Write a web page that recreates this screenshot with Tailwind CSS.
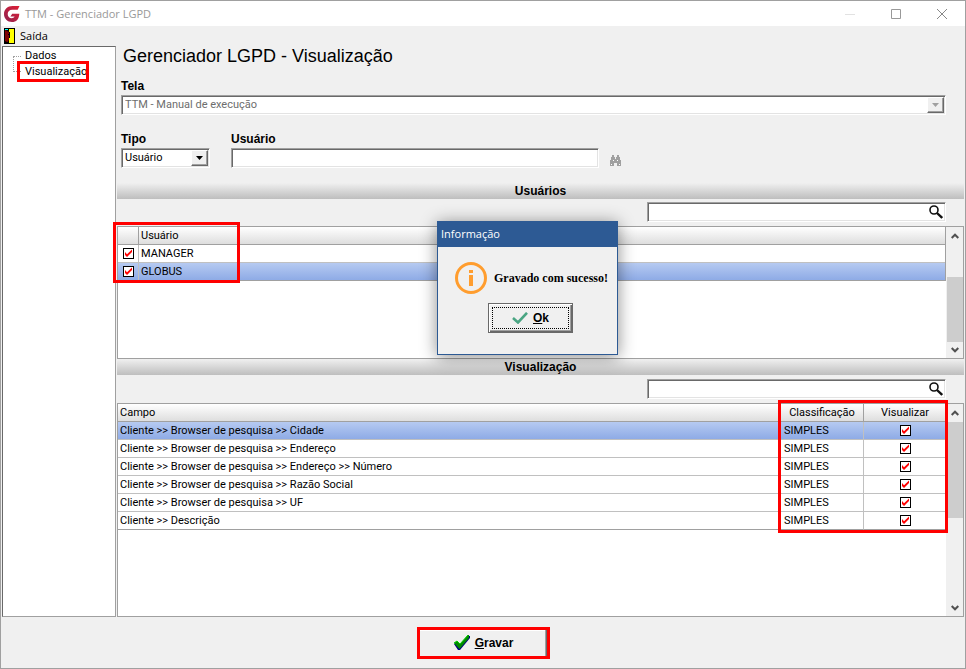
<!DOCTYPE html>
<html lang="pt-BR">
<head>
  <meta charset="UTF-8">
  <meta name="viewport" content="width=device-width, initial-scale=1.0">
  <title>TTM - Gerenciador LGPD</title>
  <script src="https://cdn.jsdelivr.net/npm/@tailwindcss/browser@4"></script>
</head>
<body class="bg-[#f0f0f0] text-black text-[11px] leading-4 font-['Roboto','Liberation_Sans',sans-serif]">
  <!-- Shared icons -->
  <svg class="hidden">
    <symbol id="tick" viewBox="0 0 11 11">
      <path d="M2 4v3l2 2 5-5V1.500L4 6.200z" fill="#f00"/>
    </symbol>
    <symbol id="search" viewBox="0 0 14 14">
      <circle cx="5" cy="5" r="4" fill="none" stroke="#111" stroke-width="1.600"/>
      <path d="M8 8l5.200 5" stroke="#111" stroke-width="2.400"/>
    </symbol>
    <symbol id="up" viewBox="0 0 8 6">
      <path d="M.7 5L4 1.700 7.300 5" fill="none" stroke="#505050" stroke-width="2"/>
    </symbol>
    <symbol id="down" viewBox="0 0 8 6">
      <path d="M.7 1L4 4.300 7.300 1" fill="none" stroke="#505050" stroke-width="2"/>
    </symbol>
  </svg>

  <div class="relative min-h-screen flex flex-col border border-[#a0a0a0]">
    <!-- Title bar -->
    <header class="flex items-center h-[25px] bg-white pl-[3px] font-['Open_Sans','Noto_Sans',sans-serif] text-[#999]">
      <svg class="w-4 h-4" viewBox="0 0 16 16">
        <defs>
          <linearGradient id="g" x1="0" x2="1" y1="1" y2="0">
            <stop offset="0" stop-color="#8e2250"/>
            <stop offset="1" stop-color="#e01f35"/>
          </linearGradient>
        </defs>
        <path d="M15.500 0H8.500C3.500 0 0 3.300 0 8c0 4.600 3.400 8 8 8 4.300 0 7-2.600 7.300-8.300H8.200L6.400 10.600h4.200c-.6 1.200-1.600 1.700-3 1.700-2.300 0-3.900-1.800-3.900-4.200 0-2.600 1.900-4.400 4.500-4.400h5.500z" fill="url(#g)"/>
      </svg>
      <h1 class="ml-[5px] grow">TTM - Gerenciador LGPD</h1>
      <div class="flex">
        <button class="w-[46px] h-6 grid place-items-center" aria-label="Minimizar">
          <svg class="w-[10px] h-[10px]" viewBox="0 0 10 10"><path d="M0 5.500h10" stroke="#e2e2e2"/></svg>
        </button>
        <button class="w-[46px] h-6 grid place-items-center" aria-label="Maximizar">
          <svg class="w-[10px] h-[10px]" viewBox="0 0 10 10"><path d="M.5.5h9v9h-9z" fill="none" stroke="#999"/></svg>
        </button>
        <button class="w-[46px] h-6 grid place-items-center" aria-label="Fechar">
          <svg class="w-[10px] h-[10px]" viewBox="0 0 10 10"><path d="M0 0l10 10M10 0L0 10" stroke="#888"/></svg>
        </button>
      </div>
    </header>

    <!-- Menu -->
    <nav class="flex items-center h-5 pl-[3px] font-['Open_Sans','Noto_Sans',sans-serif]">
      <button class="flex items-center gap-[5px]">
        <svg class="w-[11px] h-4" viewBox="0 0 11 16">
          <path d="M0 0h11v16H0z"/>
          <path d="M5 1h5v14H5z" fill="#ff0"/>
          <path d="M1 1h3v1H1z" fill="#0ff"/>
          <path d="M1 2l4 2v7l-1 3H3l-2-1z" fill="#800000"/>
          <path d="M4 6h1v1H4zM5 4h1v6H5z" fill="#000"/>
        </svg>
        <span>Saída</span>
      </button>
    </nav>

    <div class="flex grow pl-px">
      <!-- Tree -->
      <aside class="w-[114px] shrink-0 bg-white border border-[#a0a0a0] border-t-[#696969] border-l-[#696969]">
        <ul class="relative pt-px pl-[22px] before:absolute before:left-[10px] before:top-[9px] before:w-2 before:h-4 before:border-y before:border-l before:border-dotted before:border-[#a0a0a0]">
          <li><a href="#dados">Dados</a></li>
          <li class="relative">
            <a href="#visualizacao">Visualização</a>
            <span class="absolute -left-2 -top-[3px] w-[72px] h-[21px] border-3 border-[#f00]"></span>
          </li>
        </ul>
      </aside>

      <main class="flex flex-col grow min-w-0 px-px">
        <section class="pl-1 pr-[18px] h-[137px]">
          <h2 class="text-[18px] leading-5 pl-0.5 font-['Liberation_Sans',Arial,sans-serif]">Gerenciador LGPD - Visualização</h2>
          <label for="tela" class="block mt-3 text-[12px] font-bold font-['Liberation_Sans',Arial,sans-serif]">Tela</label>
          <div class="relative mt-px">
            <select id="tela" disabled class="block w-full h-5 pl-[3px] appearance-none bg-white text-[#6d6d6d] opacity-100 border border-[#a0a0a0] border-b-white border-r-white shadow-[inset_1px_1px_0_#696969,inset_-1px_-1px_0_#e3e3e3]">
              <option>TTM - Manual de execução</option>
            </select>
            <span class="absolute right-0.5 top-0.5 w-[17px] h-4 grid place-items-center pointer-events-none bg-[#f0f0f0] border border-white border-r-[#696969] border-b-[#696969] shadow-[inset_-1px_-1px_0_#a0a0a0]">
              <svg class="w-[7px] h-1" viewBox="0 0 7 4"><path d="M0 0h7L3.500 4z" fill="#a0a0a0"/></svg>
            </span>
          </div>
          <div class="flex items-start mt-4">
            <div class="w-[89px] mr-[21px]">
              <label for="tipo" class="block text-[12px] font-bold font-['Liberation_Sans',Arial,sans-serif]">Tipo</label>
              <div class="relative mt-px">
                <select id="tipo" class="block w-full h-5 pl-[3px] appearance-none bg-white border border-[#a0a0a0] border-b-white border-r-white shadow-[inset_1px_1px_0_#696969,inset_-1px_-1px_0_#e3e3e3]">
                  <option>Usuário</option>
                </select>
                <span class="absolute right-0.5 top-0.5 w-[17px] h-4 grid place-items-center pointer-events-none bg-[#f0f0f0] border border-white border-r-[#696969] border-b-[#696969] shadow-[inset_-1px_-1px_0_#a0a0a0]">
                  <svg class="w-[7px] h-1" viewBox="0 0 7 4"><path d="M0 0h7L3.500 4z"/></svg>
                </span>
              </div>
            </div>
            <div class="w-[368px]">
              <label for="usuario" class="block text-[12px] font-bold font-['Liberation_Sans',Arial,sans-serif]">Usuário</label>
              <input id="usuario" type="text" class="block mt-px w-full h-5 px-1 bg-white border border-[#a0a0a0] border-b-white border-r-white shadow-[inset_1px_1px_0_#696969,inset_-1px_-1px_0_#e3e3e3]">
            </div>
            <button class="mt-6 ml-[11px]" aria-label="Procurar usuário">
              <svg class="w-3 h-3" viewBox="0 0 12 12" shape-rendering="crispEdges">
                <path d="M2 0h2v2h1v2h1V2h1V0h2v2h1v3h1v6H7V8H4v3H0V5h1V2h1z" fill="#a0a0a0"/>
                <path d="M1 9h1v1H1zM9 9h1v1H9zM3 5h1v1H3zM7 5h1v1H7z" fill="#fff"/>
              </svg>
            </button>
          </div>
        </section>

        <!-- Usuários -->
        <h3 class="h-4 text-center text-[12px] font-bold font-['Liberation_Sans',Arial,sans-serif] bg-linear-to-b from-[#f0f0f0] to-[#bebebe]">Usuários</h3>
        <div class="flex justify-end h-[27px] pt-[3px] pr-[18px]">
          <div class="relative w-[299px] h-5">
            <input type="text" aria-label="Pesquisar usuários" class="block w-full h-full pl-1 pr-5 bg-white border border-[#a0a0a0] border-b-white border-r-white shadow-[inset_1px_1px_0_#696969,inset_-1px_-1px_0_#e3e3e3]">
            <svg class="absolute right-[3px] top-[3px] w-[14px] h-[14px]"><use href="#search"/></svg>
          </div>
        </div>
        <div class="relative flex h-[133px] bg-white border border-[#a0a0a0]">
          <div class="grow">
            <table class="w-full table-fixed border-separate border-spacing-0 border-r border-[#a0a0a0]">
              <colgroup><col class="w-[21px]"><col></colgroup>
              <thead>
                <tr class="h-[18px] bg-linear-to-b from-white to-[#dcdcdc]">
                  <th class="p-0 border-r border-b border-[#a0a0a0]"></th>
                  <th class="p-0 pl-0.5 text-left font-normal border-b border-[#a0a0a0]">Usuário</th>
                </tr>
              </thead>
              <tbody>
                <tr class="h-[18px]">
                  <td class="p-0 border-r border-b border-[#c0c0c0]">
                    <label class="relative block w-[11px] h-[11px] mx-auto">
                      <input type="checkbox" checked aria-label="MANAGER" class="peer block w-full h-full appearance-none bg-white border border-black">
                      <svg class="absolute inset-0 w-full h-full hidden peer-checked:block"><use href="#tick"/></svg>
                    </label>
                  </td>
                  <td class="p-0 pl-0.5 border-b border-[#c0c0c0]">MANAGER</td>
                </tr>
                <tr class="h-[18px] bg-linear-to-b from-[#b6caf1] to-[#8ca9e5]">
                  <td class="p-0 border-r border-b border-[#c0c0c0] border-b-[#a0a0a0]">
                    <label class="relative block w-[11px] h-[11px] mx-auto">
                      <input type="checkbox" checked aria-label="GLOBUS" class="peer block w-full h-full appearance-none bg-white border border-black">
                      <svg class="absolute inset-0 w-full h-full hidden peer-checked:block"><use href="#tick"/></svg>
                    </label>
                  </td>
                  <td class="p-0 pl-0.5 border-b border-[#a0a0a0]">GLOBUS</td>
                </tr>
              </tbody>
            </table>
          </div>
          <div class="flex flex-col items-center shrink-0 w-[17px] bg-[#f0f0f0]">
            <svg class="my-[6px] w-2 h-[6px] shrink-0"><use href="#up"/></svg>
            <div class="w-full grow flex flex-col justify-end pl-px"><div class="h-[65px] bg-[#cdcdcd]"></div></div>
            <svg class="my-[5px] w-2 h-[6px] shrink-0"><use href="#down"/></svg>
          </div>
          <span class="absolute -left-[5px] -top-[5px] w-[127px] h-[61px] border-3 border-[#f00]"></span>
        </div>

        <!-- Visualização -->
        <h3 class="h-4 text-center text-[12px] font-bold font-['Liberation_Sans',Arial,sans-serif] bg-linear-to-b from-[#f0f0f0] to-[#bebebe]">Visualização</h3>
        <div class="flex justify-end h-7 pt-1 pr-[18px]">
          <div class="relative w-[299px] h-5">
            <input type="text" aria-label="Pesquisar campos" class="block w-full h-full pl-1 pr-5 bg-white border border-[#a0a0a0] border-b-white border-r-white shadow-[inset_1px_1px_0_#696969,inset_-1px_-1px_0_#e3e3e3]">
            <svg class="absolute right-[3px] top-[3px] w-[14px] h-[14px]"><use href="#search"/></svg>
          </div>
        </div>
        <div class="relative flex grow bg-white border border-[#a0a0a0]">
          <div class="grow">
            <table class="w-full table-fixed border-separate border-spacing-0">
              <colgroup><col><col class="w-[83px]"><col class="w-[82px]"></colgroup>
              <thead>
                <tr class="h-[18px] bg-linear-to-b from-white to-[#dcdcdc]">
                  <th class="p-0 pl-0.5 text-left font-normal border-r border-b border-[#a0a0a0]">Campo</th>
                  <th class="p-0 font-normal border-r border-b border-[#a0a0a0]">Classificação</th>
                  <th class="p-0 font-normal border-b border-[#a0a0a0]">Visualizar</th>
                </tr>
              </thead>
              <tbody>
                <tr class="h-[18px] bg-linear-to-b from-[#b6caf1] to-[#8ca9e5]">
                  <td class="p-0 pl-0.5 border-r border-b border-[#c0c0c0]">Cliente &gt;&gt; Browser de pesquisa &gt;&gt; Cidade</td>
                  <td class="p-0 pl-[3px] border-r border-b border-[#c0c0c0]">SIMPLES</td>
                  <td class="p-0 border-b border-[#c0c0c0]">
                    <label class="relative block w-[11px] h-[11px] mx-auto">
                      <input type="checkbox" checked aria-label="Visualizar Cidade" class="peer block w-full h-full appearance-none bg-white border border-black">
                      <svg class="absolute inset-0 w-full h-full hidden peer-checked:block"><use href="#tick"/></svg>
                    </label>
                  </td>
                </tr>
                <tr class="h-[18px]">
                  <td class="p-0 pl-0.5 border-r border-b border-[#c0c0c0]">Cliente &gt;&gt; Browser de pesquisa &gt;&gt; Endereço</td>
                  <td class="p-0 pl-[3px] border-r border-b border-[#c0c0c0]">SIMPLES</td>
                  <td class="p-0 border-b border-[#c0c0c0]">
                    <label class="relative block w-[11px] h-[11px] mx-auto">
                      <input type="checkbox" checked aria-label="Visualizar Endereço" class="peer block w-full h-full appearance-none bg-white border border-black">
                      <svg class="absolute inset-0 w-full h-full hidden peer-checked:block"><use href="#tick"/></svg>
                    </label>
                  </td>
                </tr>
                <tr class="h-[18px]">
                  <td class="p-0 pl-0.5 border-r border-b border-[#c0c0c0]">Cliente &gt;&gt; Browser de pesquisa &gt;&gt; Endereço &gt;&gt; Número</td>
                  <td class="p-0 pl-[3px] border-r border-b border-[#c0c0c0]">SIMPLES</td>
                  <td class="p-0 border-b border-[#c0c0c0]">
                    <label class="relative block w-[11px] h-[11px] mx-auto">
                      <input type="checkbox" checked aria-label="Visualizar Número" class="peer block w-full h-full appearance-none bg-white border border-black">
                      <svg class="absolute inset-0 w-full h-full hidden peer-checked:block"><use href="#tick"/></svg>
                    </label>
                  </td>
                </tr>
                <tr class="h-[18px]">
                  <td class="p-0 pl-0.5 border-r border-b border-[#c0c0c0]">Cliente &gt;&gt; Browser de pesquisa &gt;&gt; Razão Social</td>
                  <td class="p-0 pl-[3px] border-r border-b border-[#c0c0c0]">SIMPLES</td>
                  <td class="p-0 border-b border-[#c0c0c0]">
                    <label class="relative block w-[11px] h-[11px] mx-auto">
                      <input type="checkbox" checked aria-label="Visualizar Razão Social" class="peer block w-full h-full appearance-none bg-white border border-black">
                      <svg class="absolute inset-0 w-full h-full hidden peer-checked:block"><use href="#tick"/></svg>
                    </label>
                  </td>
                </tr>
                <tr class="h-[18px]">
                  <td class="p-0 pl-0.5 border-r border-b border-[#c0c0c0]">Cliente &gt;&gt; Browser de pesquisa &gt;&gt; UF</td>
                  <td class="p-0 pl-[3px] border-r border-b border-[#c0c0c0]">SIMPLES</td>
                  <td class="p-0 border-b border-[#c0c0c0]">
                    <label class="relative block w-[11px] h-[11px] mx-auto">
                      <input type="checkbox" checked aria-label="Visualizar UF" class="peer block w-full h-full appearance-none bg-white border border-black">
                      <svg class="absolute inset-0 w-full h-full hidden peer-checked:block"><use href="#tick"/></svg>
                    </label>
                  </td>
                </tr>
                <tr class="h-[18px]">
                  <td class="p-0 pl-0.5 border-r border-b border-[#c0c0c0] border-b-[#a0a0a0]">Cliente &gt;&gt; Descrição</td>
                  <td class="p-0 pl-[3px] border-r border-b border-[#c0c0c0] border-b-[#a0a0a0]">SIMPLES</td>
                  <td class="p-0 border-b border-[#a0a0a0]">
                    <label class="relative block w-[11px] h-[11px] mx-auto">
                      <input type="checkbox" checked aria-label="Visualizar Descrição" class="peer block w-full h-full appearance-none bg-white border border-black">
                      <svg class="absolute inset-0 w-full h-full hidden peer-checked:block"><use href="#tick"/></svg>
                    </label>
                  </td>
                </tr>
              </tbody>
            </table>
          </div>
          <div class="flex flex-col items-center shrink-0 w-[17px] bg-[#f0f0f0]">
            <svg class="my-[6px] w-2 h-[6px] shrink-0"><use href="#up"/></svg>
            <div class="w-full grow pl-px"><div class="h-[96px] bg-[#cdcdcd]"></div></div>
            <svg class="my-[5px] w-2 h-[6px] shrink-0"><use href="#down"/></svg>
          </div>
          <span class="absolute right-[15px] -top-1 w-[170px] h-[133px] border-3 border-[#f00]"></span>
        </div>
      </main>
    </div>

    <!-- Footer -->
    <footer class="flex justify-center h-[51px] pt-[10px]">
      <button class="flex items-center justify-center gap-1 w-[133px] h-8 border-3 border-[#f00] text-[12px] font-bold font-['Liberation_Sans',Arial,sans-serif] shadow-[inset_-1px_0_0_#696969,inset_-2px_0_0_#a0a0a0,inset_0_1px_0_#fff]">
        <svg class="w-[18px] h-4" viewBox="0 0 18 16">
          <path d="M1 9l3-2 3 3 8-9h2v2L7 15H5z" fill="#000080"/>
          <path d="M1 8l3-2 3 3 8-9h1v3L6.500 14z" fill="#008a00"/>
          <path d="M1 8l3-2 3 3 8-9" stroke="#00d000" fill="none"/>
        </svg>
        <span><u>G</u>ravar</span>
      </button>
    </footer>

    <!-- Message box -->
    <div role="dialog" aria-labelledby="dialog-title" class="absolute left-[436px] top-[220px] w-[181px] h-[134px] bg-[#f0f0f0] border border-[#2d5a94] shadow-[0_2px_16px_rgba(0,0,0,0.45)]">
      <h4 id="dialog-title" class="h-[25px] leading-6 pl-[3px] bg-[#2d5a94] text-white font-['Open_Sans','Noto_Sans',sans-serif]">Informação</h4>
      <div class="flex items-center gap-[7px] mt-[15px] pl-[17px]">
        <svg class="w-8 h-8 shrink-0" viewBox="0 0 32 32">
          <circle cx="16" cy="16" r="14.500" fill="none" stroke="#ff9d2e" stroke-width="3"/>
          <path d="M14 8h4v3h-4zM14 13h4v11h-4z" fill="#ff9d2e"/>
        </svg>
        <p class="whitespace-nowrap font-bold text-[12px] font-['Liberation_Serif',serif]">Gravado com sucesso!</p>
      </div>
      <button class="block mt-[9px] ml-[50px] w-[85px] h-[30px] p-[3px] border border-[#696969] text-[12px] font-bold font-['Liberation_Sans',Arial,sans-serif] shadow-[inset_1px_1px_0_#fff,inset_-1px_-1px_0_#696969,inset_-2px_-2px_0_#a0a0a0]">
        <span class="flex items-center justify-center gap-[5px] h-full border border-dotted border-black">
          <svg class="w-4 h-3" viewBox="0 0 16 12"><path d="M1 6l5 4.500L15 .8" fill="none" stroke="#4aa583" stroke-width="2.600"/></svg>
          <span><u>O</u>k</span>
        </span>
      </button>
    </div>
  </div>
</body>
</html>
